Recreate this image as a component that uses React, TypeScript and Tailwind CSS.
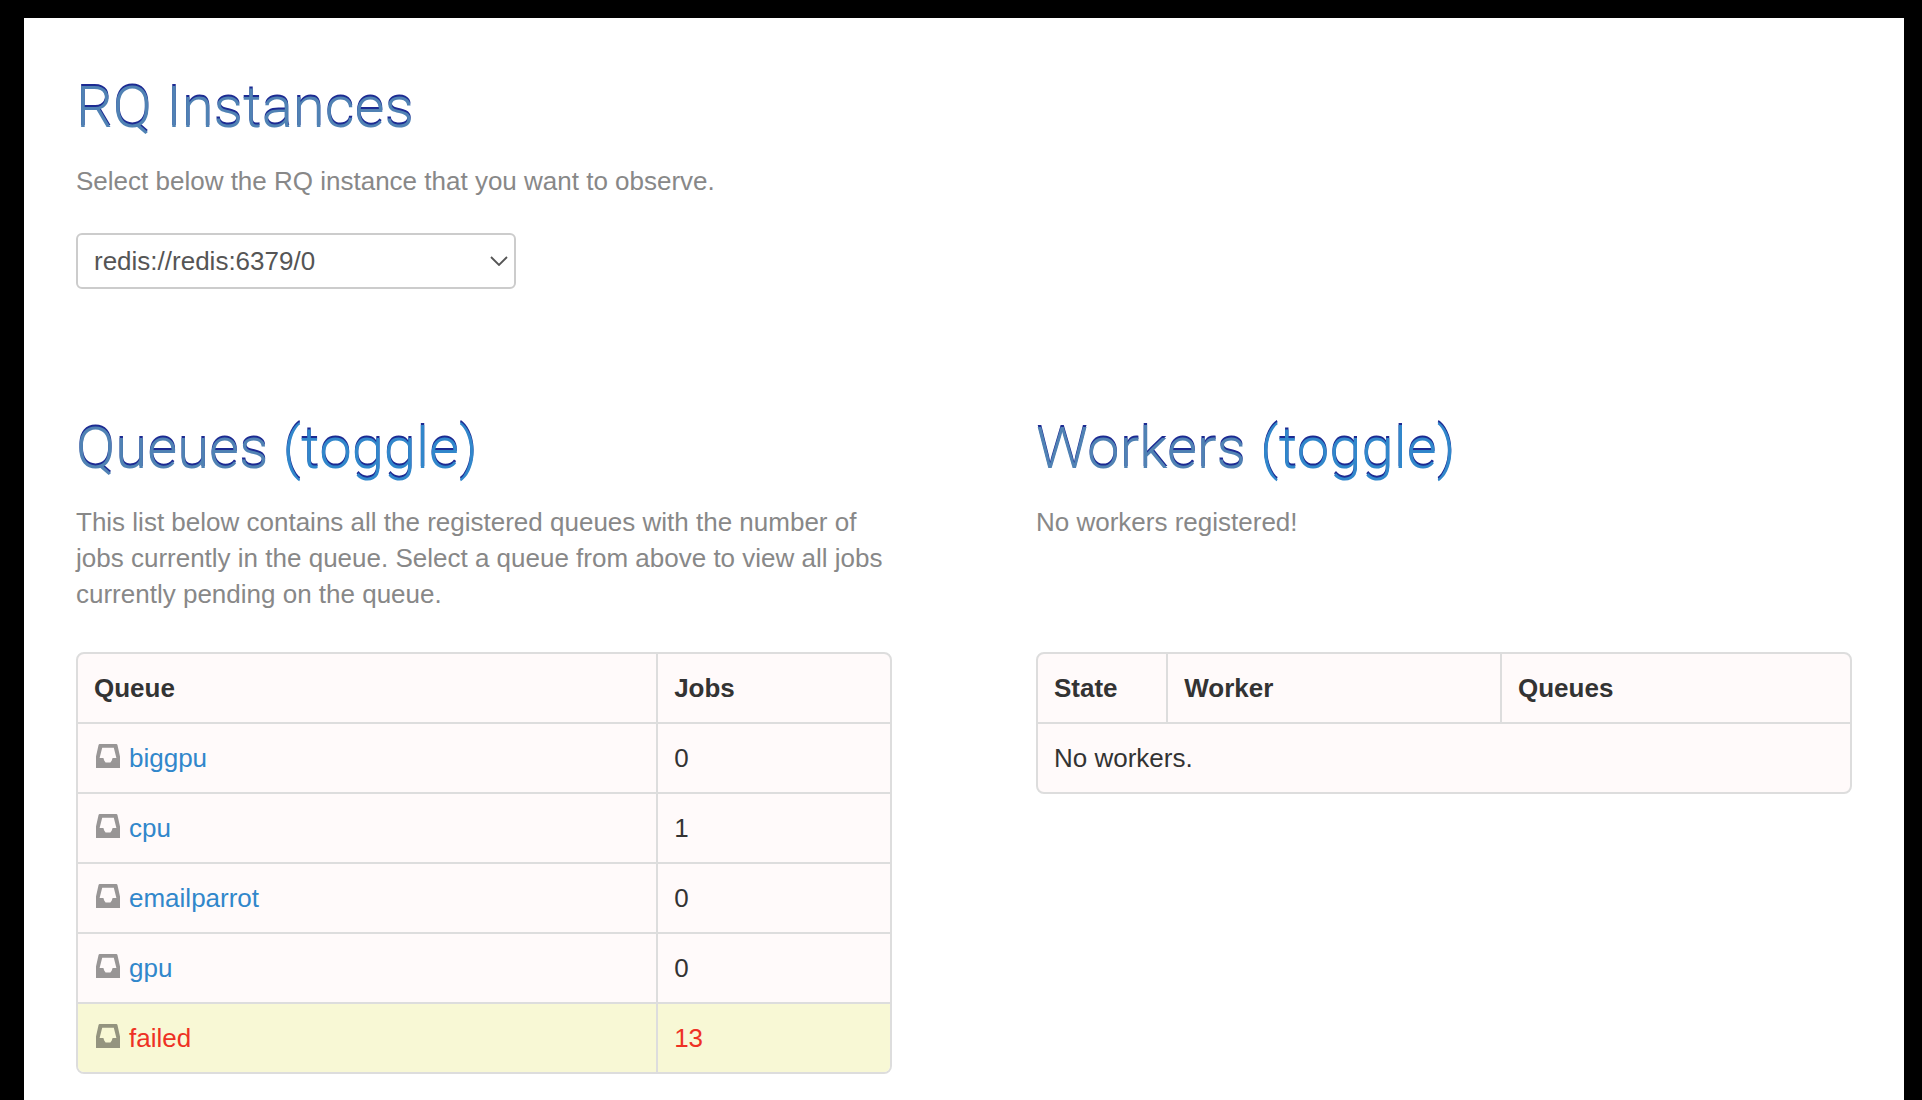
import type { ReactNode } from "react";

const queues = [
  { name: "biggpu", jobs: 0 },
  { name: "cpu", jobs: 1 },
  { name: "emailparrot", jobs: 0 },
  { name: "gpu", jobs: 0 },
  { name: "failed", jobs: 13, failed: true },
];

function InboxIcon() {
  return (
    <svg viewBox="0 0 24 24" className="mt-1 ml-0.5 h-6 w-6 shrink-0 opacity-40" fill="#000" fillRule="evenodd" aria-hidden="true">
      <path d="M3.4 0H20.6L21.4 .8L24 12.5V24H0V12.5L2.6 .8ZM6.2 3.8L3.6 14H7.4L8.2 16.5L9.6 18.6H14.4L15.8 16.5L16.6 14H20.4L17.8 3.8Z" />
    </svg>
  );
}

function Heading({ children }: { children: ReactNode }) {
  return (
    <h1 className="mb-5 font-['Roboto',sans-serif] text-[58px] leading-[72px] font-light text-[#5082b4] [text-shadow:0_-2px_0_#1c2a92]">
      {children}
    </h1>
  );
}

function Toggle() {
  return (
    <a href="#toggle" className="text-[#3187cb]">
      (toggle)
    </a>
  );
}

function TableFrame({ children }: { children: ReactNode }) {
  return (
    <div className="overflow-hidden rounded-lg border-2 border-[#dddddd] bg-[#fffafa]">
      <table className="w-full table-fixed border-separate border-spacing-0 text-left">{children}</table>
    </div>
  );
}

const cell = "p-4";
const line = "border-[#dddddd]";

export default function App() {
  return (
    <div className="flex min-h-screen flex-col bg-black pt-[18px] pr-[18px] pl-6 font-['Liberation_Sans',Arial,sans-serif] text-[26px] leading-9 text-[#333333]">
      <main className="flex-1 bg-white px-[52px] pt-[53px] pb-6">
        <section>
          <Heading>RQ Instances</Heading>
          <p className="text-[#888888]">
            <label htmlFor="instance">Select below the RQ instance that you want to observe.</label>
          </p>
          <div className="relative mt-[34px] w-[440px]">
            <select
              id="instance"
              className="block h-14 w-full appearance-none rounded-md border-2 border-[#cccccc] bg-white pr-10 pl-4 text-[#555555]"
            >
              <option>redis://redis:6379/0</option>
            </select>
            <svg
              viewBox="0 0 18 10"
              className="pointer-events-none absolute top-[23px] right-2 h-2.5 w-[18px]"
              fill="none"
              stroke="#555"
              strokeWidth="1.8"
              aria-hidden="true"
            >
              <path d="M1 1L9 9L17 1" />
            </svg>
          </div>
        </section>

        <div className="mt-[123px] grid grid-cols-2 items-start gap-36">
          <section>
            <Heading>
              Queues <Toggle />
            </Heading>
            <p className="mb-10 min-h-27 text-[#888888]">
              This list below contains all the registered queues with the number of jobs currently in the queue. Select a
              queue from above to view all jobs currently pending on the queue.
            </p>
            <TableFrame>
              <thead>
                <tr>
                  <th className={`${cell} w-[71.2%]`}>Queue</th>
                  <th className={`${cell} ${line} border-l-2`}>Jobs</th>
                </tr>
              </thead>
              <tbody>
                {queues.map((q) => (
                  <tr key={q.name} className={q.failed ? "bg-[#f8f8d5] text-[#ee3124]" : ""}>
                    <td className={`${cell} ${line} border-t-2`}>
                      <div className="flex gap-[9px]">
                        <InboxIcon />
                        <a href={`#${q.name}`} className={q.failed ? "text-[#ee3124]" : "text-[#3187cb]"}>
                          {q.name}
                        </a>
                      </div>
                    </td>
                    <td className={`${cell} ${line} border-t-2 border-l-2`}>{q.jobs}</td>
                  </tr>
                ))}
              </tbody>
            </TableFrame>
          </section>

          <section>
            <Heading>
              Workers <Toggle />
            </Heading>
            <p className="mb-10 min-h-27 text-[#888888]">No workers registered!</p>
            <TableFrame>
              <thead>
                <tr>
                  <th className={`${cell} w-[15.8%]`}>State</th>
                  <th className={`${cell} ${line} w-[41.1%] border-l-2`}>Worker</th>
                  <th className={`${cell} ${line} border-l-2`}>Queues</th>
                </tr>
              </thead>
              <tbody>
                <tr>
                  <td colSpan={3} className={`${cell} ${line} border-t-2`}>
                    No workers.
                  </td>
                </tr>
              </tbody>
            </TableFrame>
          </section>
        </div>
      </main>
    </div>
  );
}
